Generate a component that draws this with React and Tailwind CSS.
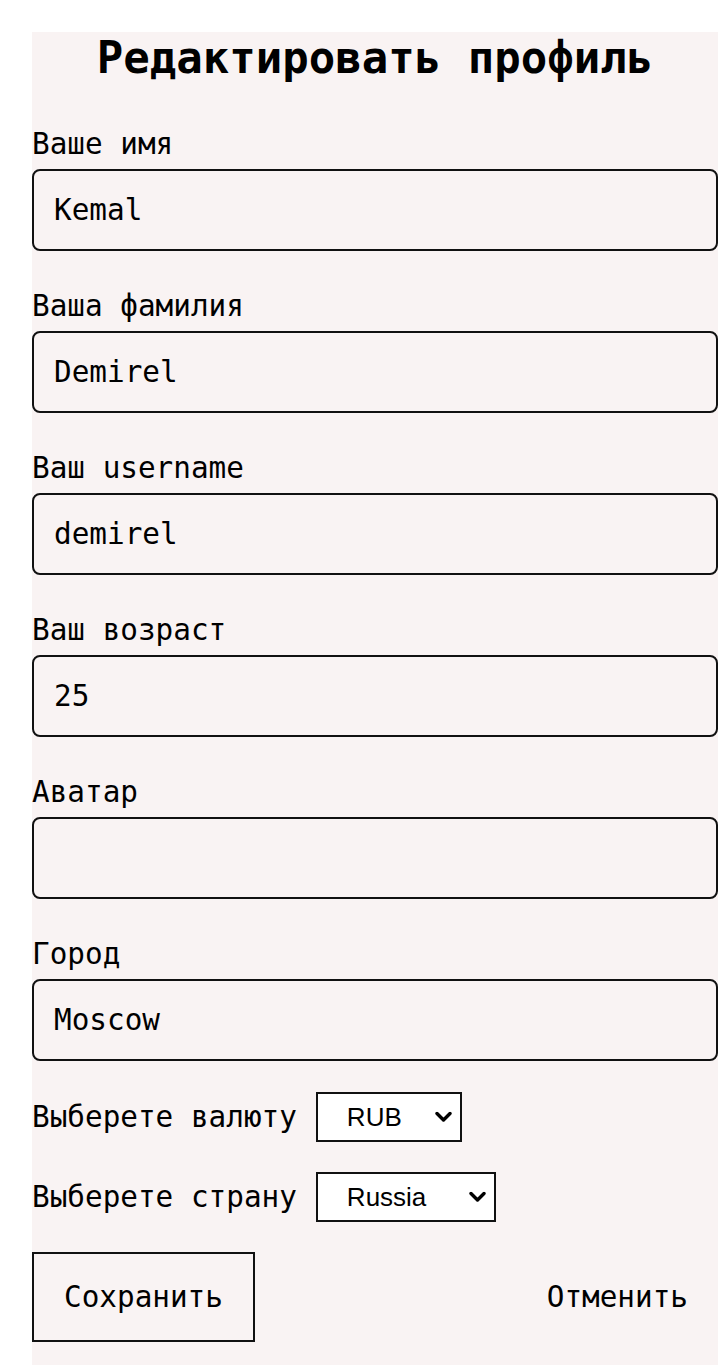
import React, { useState } from 'react';

const Field = ({ label, value, onChange }) => (
    <div className="flex flex-col gap-2">
        <label className="block leading-[34px]">{label}</label>
        <input
            type="text"
            value={value}
            onChange={(e) => onChange(e.target.value)}
            className="h-[82px] w-full rounded-[8px] border-2 border-[#111] bg-transparent px-5 leading-[34px] text-black outline-none"
        />
    </div>
);

const Chevron = () => (
    <svg className="pointer-events-none absolute right-[10px] top-1/2 -translate-y-1/2" width="17" height="11" viewBox="0 0 17 11" fill="none">
        <polyline points="2,2 8.5,8.5 15,2" stroke="#000" strokeWidth="3.4" strokeLinecap="round" strokeLinejoin="round" />
    </svg>
);

const App = () => {
    const [name, setName] = useState('Kemal');
    const [surname, setSurname] = useState('Demirel');
    const [username, setUsername] = useState('demirel');
    const [age, setAge] = useState('25');
    const [avatar, setAvatar] = useState('');
    const [city, setCity] = useState('Moscow');
    const [currency, setCurrency] = useState('RUB');
    const [country, setCountry] = useState('Russia');

    return (
        <div className="min-h-screen bg-white pt-8 pl-8">
            <form
                onSubmit={(e) => e.preventDefault()}
                className="bg-[#f9f3f3] pb-[23px] font-['DejaVu_Sans_Mono',monospace] text-[29.33px] text-black"
            >
                <h1 className="text-center text-[44px] font-bold leading-[51px]">Редактировать профиль</h1>

                <div className="mt-[44px] flex flex-col gap-[38px]">
                    <Field label="Ваше имя" value={name} onChange={setName} />
                    <Field label="Ваша фамилия" value={surname} onChange={setSurname} />
                    <Field label="Ваш username" value={username} onChange={setUsername} />
                    <Field label="Ваш возраст" value={age} onChange={setAge} />
                    <Field label="Аватар" value={avatar} onChange={setAvatar} />
                    <Field label="Город" value={city} onChange={setCity} />
                </div>

                <div className="mt-[31px] flex flex-col gap-[30px]">
                    <div className="flex items-center gap-[19px]">
                        <span className="leading-[34px]">Выберете валюту</span>
                        <div className="relative">
                            <select
                                value={currency}
                                onChange={(e) => setCurrency(e.target.value)}
                                className="h-[50px] w-[146px] appearance-none border-2 border-[#111] bg-white pl-[29px] font-['Liberation_Sans',Arial,sans-serif] text-[26px] outline-none"
                            >
                                <option>RUB</option>
                                <option>USD</option>
                                <option>EUR</option>
                            </select>
                            <Chevron />
                        </div>
                    </div>
                    <div className="flex items-center gap-[19px]">
                        <span className="leading-[34px]">Выберете страну</span>
                        <div className="relative">
                            <select
                                value={country}
                                onChange={(e) => setCountry(e.target.value)}
                                className="h-[50px] w-[180px] appearance-none border-2 border-[#111] bg-white pl-[29px] font-['Liberation_Sans',Arial,sans-serif] text-[26px] outline-none"
                            >
                                <option>Russia</option>
                                <option>Turkey</option>
                            </select>
                            <Chevron />
                        </div>
                    </div>
                    <div className="flex items-center justify-between">
                        <button type="submit" className="border-2 border-[#111] px-[30px] py-[26px] leading-[34px]">Сохранить</button>
                        <button type="button" className="border-2 border-transparent py-[26px] pr-[28px] pl-[30px] leading-[34px]">Отменить</button>
                    </div>
                </div>
            </form>
        </div>
    );
};

export default App;
